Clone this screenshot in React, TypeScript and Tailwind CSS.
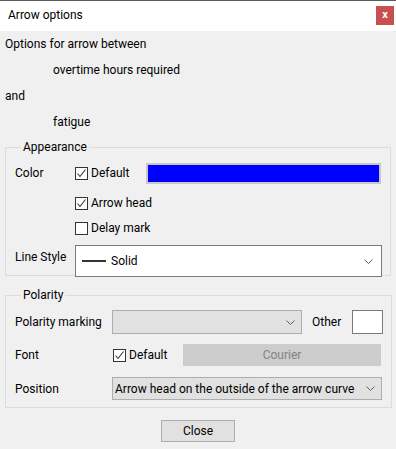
import React from 'react';

const Check: React.FC<{ checked?: boolean; label: string }> = ({ checked, label }) => (
    <label className="flex items-center gap-[3px] h-[20px]">
        <span className="w-[13px] h-[13px] border border-[#333333] bg-white flex items-center justify-center">
            {checked && (
                <svg width="11" height="11" viewBox="0 0 11 11">
                    <path d="M1.5 5.5 L4 8.5 L9.5 1.5" fill="none" stroke="#333333" strokeWidth="1.1" />
                </svg>
            )}
        </span>
        <span>{label}</span>
    </label>
);

const Chevron = () => (
    <svg width="9" height="5" viewBox="0 0 9 5">
        <path d="M0.5 0.5 L4.5 4.5 L8.5 0.5" fill="none" stroke="#606060" strokeWidth="1" />
    </svg>
);

export default function App() {
    return (
        <div className="w-[396px] h-[449px] flex flex-col bg-[#f0f0f0] text-[12px] leading-[16px] text-black font-[Roboto,sans-serif]">
            <div className="h-[1px] bg-[#5c5c5c]" />
            {/* Title bar */}
            <div className="h-[30px] bg-white flex items-center justify-between pl-[8px] pr-[2px]">
                <span className="pb-[2px]">Arrow options</span>
                <button className="w-[18px] h-[19px] bg-[#c75050] text-white text-[11px] font-bold flex items-center justify-center mb-[2px]">x</button>
            </div>

            <div className="flex flex-col">
                <div className="h-[26px] flex items-center pl-[5px]">Options for arrow between</div>
                <div className="h-[26px] flex items-center pl-[53px]">overtime hours required</div>
                <div className="h-[26px] flex items-center pl-[5px]">and</div>
                <div className="h-[26px] flex items-center pl-[53px]">fatigue</div>
            </div>

            {/* Appearance */}
            <fieldset className="mx-[5px] mt-[4px] border border-[#dcdcdc] pl-[9px] pr-[8px]">
                <legend className="ml-[6px] px-[2px] leading-[16px]">Appearance</legend>
                <div className="flex items-center h-[20px] mt-[8px]">
                    <span className="w-[60px]">Color</span>
                    <div className="w-[71px]"><Check checked label="Default" /></div>
                    <div className="w-[235px] h-[21px] border-2 border-[#c8c8c8] bg-[#0000ff]" />
                </div>
                <div className="h-[20px] mt-[10px] pl-[60px]"><Check checked label="Arrow head" /></div>
                <div className="h-[20px] mt-[5px] pl-[60px]"><Check label="Delay mark" /></div>
                <div className="flex items-start mt-[7px] -mb-[2px]">
                    <span className="w-[60px] pt-[4px]">Line Style</span>
                    <div className="w-[307px] h-[32px] border border-[#7a7a7a] bg-white flex items-center pl-[6px] pr-[8px]">
                        <span className="w-[24px] h-[2px] bg-[#333333]" />
                        <span className="ml-[5px] flex-1">Solid</span>
                        <Chevron />
                    </div>
                </div>
            </fieldset>

            {/* Polarity */}
            <fieldset className="mx-[5px] mt-[11px] border border-[#dcdcdc] pl-[9px] pr-[8px] pb-[7px]">
                <legend className="ml-[6px] px-[2px] leading-[16px]">Polarity</legend>
                <div className="flex items-center mt-[7px]">
                    <span className="w-[97px]">Polarity marking</span>
                    <div className="w-[190px] h-[24px] border border-[#adadad] bg-[#e1e1e1] flex items-center justify-end pr-[6px]">
                        <Chevron />
                    </div>
                    <span className="ml-[10px] w-[40px]">Other</span>
                    <div className="w-[31px] h-[24px] border border-[#7a7a7a] bg-white" />
                </div>
                <div className="flex items-center mt-[10px]">
                    <span className="w-[97px]">Font</span>
                    <div className="w-[71px] pl-[1px]"><Check checked label="Default" /></div>
                    <div className="w-[198px] h-[22px] bg-[#cccccc] text-[#838383] flex items-center justify-center">Courier</div>
                </div>
                <div className="flex items-center mt-[11px]">
                    <span className="w-[97px]">Position</span>
                    <div className="w-[270px] h-[23px] border border-[#adadad] bg-[#e1e1e1] flex items-center pl-[2px] pr-[6px]">
                        <span className="flex-1">Arrow head on the outside of the arrow curve</span>
                        <Chevron />
                    </div>
                </div>
            </fieldset>

            <div className="flex justify-center mt-[12px]">
                <button className="w-[74px] h-[22px] border border-[#adadad] bg-[#e1e1e1]">Close</button>
            </div>
        </div>
    );
}
